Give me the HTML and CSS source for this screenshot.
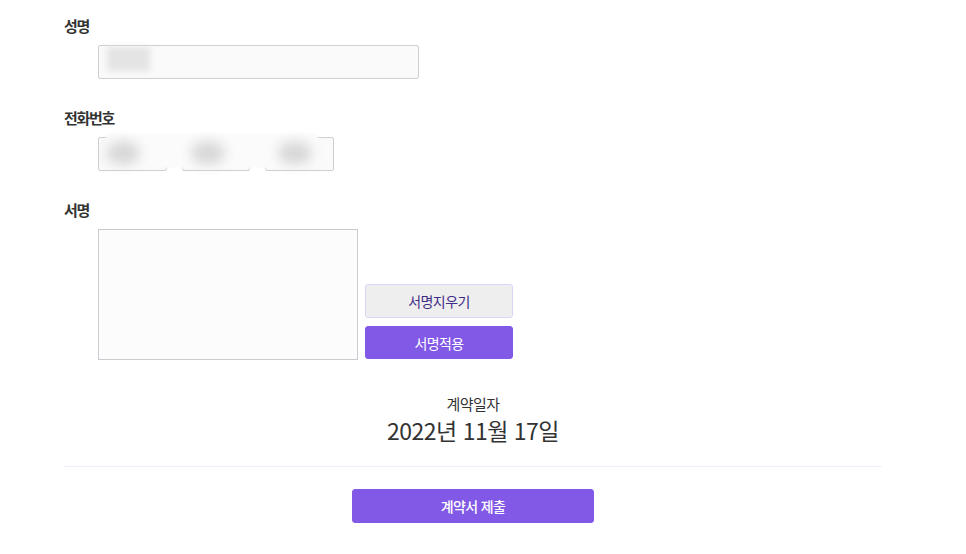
FILE: index.html
```html
<!DOCTYPE html>
<html lang="ko">
<head>
<meta charset="utf-8">
<link rel="stylesheet" href="styles.css">
</head>
<body>
<div class="form">
  <div class="field">
    <div class="label">성명</div>
    <div class="row">
      <div class="input name"><span class="blur-name"></span></div>
    </div>
  </div>
  <div class="field">
    <div class="label">전화번호</div>
    <div class="row phone">
      <div class="input tel"></div>
      <div class="input tel"></div>
      <div class="input tel"></div>
      <div class="mask">
        <span class="blob b1"></span>
        <span class="blob b2"></span>
        <span class="blob b3"></span>
      </div>
    </div>
  </div>
  <div class="field">
    <div class="label">서명</div>
    <div class="row sign">
      <div class="canvas"></div>
      <div class="sign-btns">
        <button class="btn light">서명지우기</button>
        <button class="btn primary">서명적용</button>
      </div>
    </div>
  </div>
  <div class="date">
    <div class="date-label">계약일자</div>
    <div class="date-value">2022년 11월 17일</div>
  </div>
  <hr class="divider">
  <div class="submit-wrap">
    <button class="btn primary submit">계약서 제출</button>
  </div>
</div>
</body>
</html>
```
FILE: styles.css
```css
* { box-sizing: border-box; }
body {
  margin: 0;
  background: #fff;
  font-family: "Noto Sans CJK KR", "Noto Sans", sans-serif;
  color: #333;
}
.form {
  width: 882px;
  padding: 16px 0 0 64px;
}
.field { margin-bottom: 29px; }
.label {
  font-size: 15px;
  line-height: 20px;
  height: 20px;
  font-weight: 700;
  letter-spacing: -1.3px;
  color: #333;
}
.row {
  margin: 9px 0 0 34px;
  display: flex;
}
.input {
  height: 34px;
  background: #fafafa;
  border: 1px solid #cfcfd3;
  border-radius: 2px;
}
.input.name {
  width: 321px;
  position: relative;
}
.blur-name {
  position: absolute;
  left: 8px;
  top: 1px;
  width: 43px;
  height: 24px;
  background: #e4e4e4;
  filter: blur(3px);
}
.phone {
  gap: 15px;
  position: relative;
}
.input.tel { width: 69px; }
.phone .input.tel:nth-child(2) { width: 68px; }
.mask {
  position: absolute;
  left: 8px;
  top: -3px;
  width: 212px;
  height: 34px;
  background: #fbfbfb;
  filter: blur(1px);
}
.blob {
  position: absolute;
  top: 7px;
  width: 34px;
  height: 24px;
  border-radius: 50%;
  background: #d8d8d8;
  filter: blur(6px);
}
.b1 { left: 0; }
.b2 { left: 85px; }
.b3 { left: 172px; }
.field:last-of-type { margin-bottom: 0; }
.sign { align-items: flex-end; gap: 7px; }
.canvas {
  width: 260px;
  height: 131px;
  background: #fcfcfc;
  border: 1px solid #cacad0;
}
.sign-btns {
  display: flex;
  flex-direction: column;
  gap: 8px;
  width: 148px;
  margin-bottom: 1px;
}
.btn {
  font-family: inherit;
  font-size: 14px;
  font-weight: 400;
  letter-spacing: -0.6px;
  height: 34px;
  border-radius: 3px;
  cursor: pointer;
  padding: 0;
}
.btn.light {
  background: #eeeeef;
  border: 1px solid #dcd4f7;
  color: #3e2b86;
}
.btn.primary {
  background: #8159e6;
  border: 1px solid #8159e6;
  color: #fff;
  height: 33px;
}
.date {
  margin-top: 34px;
  text-align: center;
}
.date-label {
  font-size: 15px;
  line-height: 20px;
  letter-spacing: -0.5px;
  color: #333;
}
.date-value {
  font-size: 23px;
  line-height: 32px;
  letter-spacing: -0.5px;
  color: #333;
}
.divider {
  margin: 20px 0 0;
  border: 0;
  height: 1px;
  background: #f3eefe;
}
.submit-wrap {
  display: flex;
  justify-content: center;
  margin-top: 22px;
}
.btn.submit {
  width: 242px;
  height: 34px;
  font-weight: 500;
}
```
